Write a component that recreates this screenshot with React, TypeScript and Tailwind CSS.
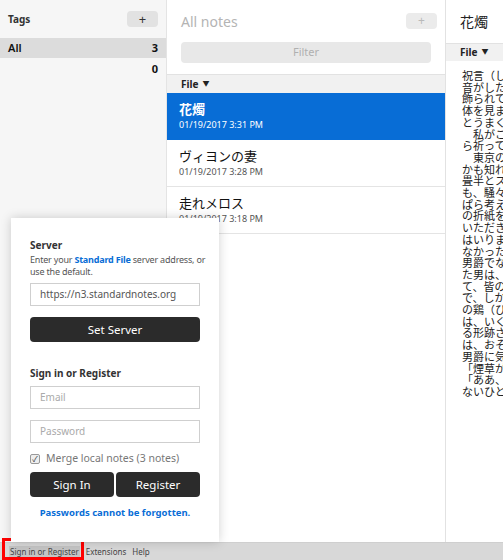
import React from 'react';

const sans = { fontFamily: '"Noto Sans", "Noto Sans CJK JP", sans-serif' };

const notes = [
  { title: '花燭', date: '01/19/2017 3:31 PM', active: true },
  { title: 'ヴィヨンの妻', date: '01/19/2017 3:28 PM', active: false },
  { title: '走れメロス', date: '01/19/2017 3:18 PM', active: false },
];

const bodyLines = [
  '祝言（しゅうげん）',
  '音がしたので',
  '飾られてある',
  '体を見まわす',
  'とうまく行く',
  '　私がこの家',
  'ら祈っていた',
  '　東京の郊外',
  'かも知れない',
  '畳半とスリッ',
  'も、騒々しい',
  'ぱら考えてい',
  'の折紙をつけ',
  'いただきたい',
  'はいりません',
  'なかったので',
  '男爵でなくて',
  'た男は、いつ',
  'て、皆の前で',
  'で、しかも誰',
  'の鶏（ひよこ',
  'は、いくらか',
  'る形跡さえも',
  'は、おそらく',
  '男爵に気づか',
  '「煙草がない',
  '「ああ、そう',
  'ないひとだ',
];

function FileBar({ className }: { className?: string }) {
  return (
    <div className={`flex items-center bg-[#f1f1f1] border-t border-[#e2e2e2] text-[10px] font-bold text-[#222] ${className || ''}`}>
      File <span className="ml-1 text-[7px]">▼</span>
    </div>
  );
}

export default function App() {
  return (
    <div className="relative w-[503px] h-[560px] flex flex-col overflow-hidden bg-white" style={sans}>
      <div className="flex flex-1 min-h-0">
        {/* tags */}
        <div className="w-[167px] shrink-0 bg-[#f6f6f6] border-r border-[#e4e4e4]">
          <div className="flex items-center justify-between h-[38px] pl-2 pr-2">
            <span className="text-[10px] font-bold text-[#333]">Tags</span>
            <button className="w-[31px] h-[16px] rounded-sm bg-[#e2e2e2] text-[13px] leading-none text-[#333]">+</button>
          </div>
          <div className="flex items-center justify-between h-[20px] bg-[#dcdcdc] px-2 text-[11px] font-semibold text-[#111]">
            <span>All</span>
            <span className="font-bold">3</span>
          </div>
          <div className="flex items-center justify-end h-[22px] px-2 text-[11px] font-bold text-[#111]">0</div>
        </div>

        {/* notes */}
        <div className="w-[279px] shrink-0 border-r border-[#e2e2e2] flex flex-col">
          <div className="flex items-center justify-between h-[42px] pl-[14px] pr-[8px]">
            <span className="text-[14px] text-[#b4b4b4]">All notes</span>
            <button className="w-[31px] h-[16px] rounded-sm bg-[#ebebeb] text-[12px] leading-none text-[#b9b9b9]">+</button>
          </div>
          <div className="px-[14px]">
            <div className="h-[21px] rounded-sm bg-[#e8e8e8] flex items-center justify-center text-[11px] text-[#b0b0b0]">Filter</div>
          </div>
          <FileBar className="mt-[11px] h-[19px] pl-[14px]" />
          {notes.map((n) => (
            <div
              key={n.title}
              className={`h-[47px] flex flex-col pt-[7px] pl-[12px] ${
                n.active ? 'bg-[#086dd6] text-white' : 'border-b border-[#e4e4e4] text-[#111]'
              }`}
            >
              <div className={`text-[13px] leading-[18px] ${n.active ? 'font-bold' : ''}`}>{n.title}</div>
              <div className={`text-[9px] leading-[14px] ${n.active ? 'text-white' : 'text-[#555]'}`}>{n.date}</div>
            </div>
          ))}
        </div>

        {/* editor */}
        <div className="flex-1 min-w-0 flex flex-col overflow-hidden">
          <div className="h-[43px] flex items-center pl-[14px] text-[14px] text-[#222]">花燭</div>
          <FileBar className="h-[18px] pl-[14px]" />
          <div
            className="pl-[16px] pt-[9px] text-[11px] leading-[11.7px] text-[#222] whitespace-nowrap overflow-hidden"
            style={{ fontFamily: '"Noto Sans CJK JP", sans-serif' }}
          >
            {bodyLines.map((l, i) => (
              <div key={i}>{l}</div>
            ))}
          </div>
        </div>
      </div>

      {/* footer */}
      <div className="h-[18px] shrink-0 bg-[#d8d8d8] border-t border-[#cfcfcf] flex items-center gap-[6px] pl-[9px] text-[8px] text-[#444]">
        <span className="bg-[#c4c4c4] px-[1px]">Sign in or Register</span>
        <span>Extensions</span>
        <span>Help</span>
      </div>
      <div className="absolute left-[2px] top-[538px] w-[82px] h-[22px] border-[3px] border-[#f00]" />

      {/* account popover */}
      <div className="absolute left-[11px] top-[218px] w-[208px] h-[324px] bg-white shadow-[0_0_10px_rgba(0,0,0,0.18)] px-[19px] pt-[20px]">
        <div className="text-[10px] font-bold text-[#333]">Server</div>
        <div className="mt-[1px] -mr-[8px] text-[9px] tracking-[-0.2px] leading-[12px] text-[#555]">
          Enter your <span className="font-bold text-[#086dd6]">Standard File</span> server address, or use the default.
        </div>
        <div className="mt-[5px] h-[23px] border border-[#cfcfcf] flex items-center pl-[9px] text-[10px] text-[#555]">
          https://n3.standardnotes.org
        </div>
        <button className="mt-[11px] w-full h-[25px] bg-[#2b2b2b] rounded-sm text-white text-[11.5px]">Set Server</button>
        <div className="mt-[24px] text-[10px] font-bold text-[#333]">Sign in or Register</div>
        <div className="mt-[5px] h-[23px] border border-[#cfcfcf] flex items-center pl-[9px] text-[10px] text-[#aaa]">Email</div>
        <div className="mt-[11px] h-[23px] border border-[#cfcfcf] flex items-center pl-[9px] text-[10px] text-[#aaa]">Password</div>
        <div className="mt-[8px] flex items-center gap-[6px] text-[10.5px] text-[#777]">
          <span className="w-[10px] h-[10px] border border-[#999] bg-[#eee] rounded-[2px] flex items-center justify-center text-[8px] leading-none text-[#333]">✓</span>
          Merge local notes (3 notes)
        </div>
        <div className="mt-[5px] flex gap-[2px]">
          <button className="w-[84px] h-[25px] bg-[#2b2b2b] rounded-sm text-white text-[11.5px]">Sign In</button>
          <button className="flex-1 h-[25px] bg-[#2b2b2b] rounded-sm text-white text-[11.5px]">Register</button>
        </div>
        <div className="mt-[9px] text-center text-[9.5px] font-bold text-[#086dd6]">Passwords cannot be forgotten.</div>
      </div>
    </div>
  );
}
